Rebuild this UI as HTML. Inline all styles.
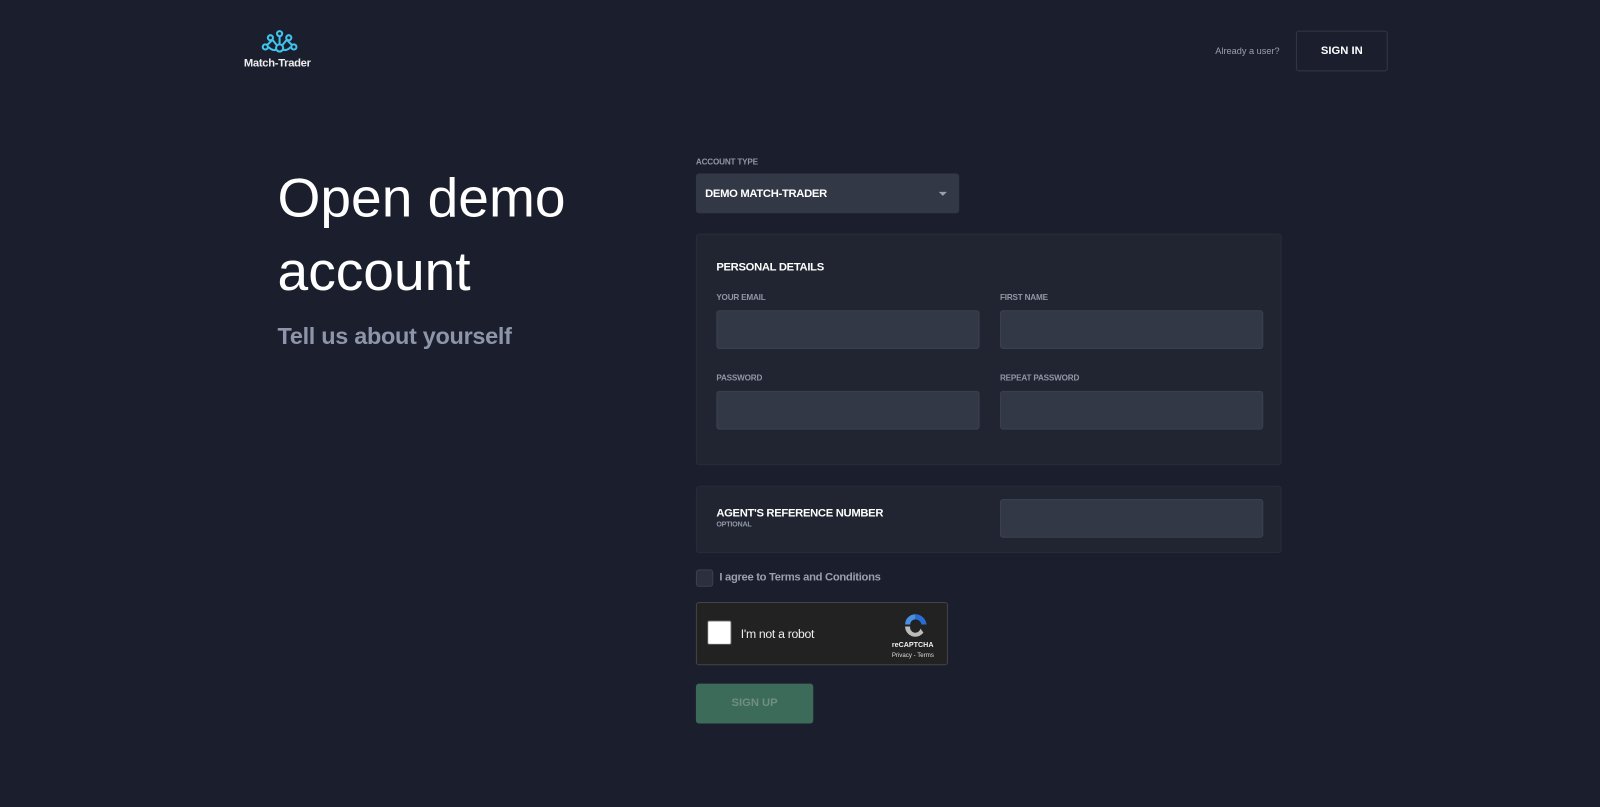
<!DOCTYPE html>
<html><head><style>
*{box-sizing:border-box;margin:0;padding:0}
body{width:1600px;height:807px;background:#1b1f2d;font-family:"Liberation Sans",sans-serif;color:#fff;overflow:hidden}
#w{position:relative;width:1568px;height:791px;transform:scale(1.0204);transform-origin:0 0}
.abs{position:absolute}
.lbl{font-size:8px;color:#9096a6;font-weight:bold;letter-spacing:-0.2px}
.inp{position:absolute;background:#333846;border:1px solid #3b4050;border-radius:3px;height:38px;width:258px}
.card{position:absolute;background:#212531;border:1px solid #282c38;border-radius:3px}
</style></head><body><div id="w">
<svg class="abs" style="left:256px;top:29px" width="36" height="25" viewBox="0 0 36 25" fill="none" stroke="#3fc4ee" stroke-width="2">
<circle cx="18" cy="4" r="2.5"/><circle cx="9" cy="8" r="2.5"/><circle cx="27" cy="8" r="2.5"/><circle cx="4" cy="17" r="2.5"/><circle cx="32" cy="17" r="2.5"/><circle cx="18" cy="18" r="3.5"/>
<path d="M18 7V14M11 10L15 15M25 10L21 15M7 17C10 20 13 21 15 19M29 17C26 20 23 21 21 19M11 10L6 15M25 10L30 15"/></svg>
<div class="abs" style="left:239px;top:56px;font-size:11px;font-weight:bold;color:#eee;letter-spacing:-0.3px">Match-Trader</div>
<div class="abs" style="left:1191px;top:45px;font-size:9px;color:#9aa0ae">Already a user?</div>
<div class="abs" style="left:1270px;top:30px;width:90px;height:40px;border:1px solid #333846;border-radius:3px;font-size:11px;font-weight:bold;text-align:center;line-height:38px">SIGN IN</div>
<div class="abs" style="left:272px;top:158px;font-size:54px;line-height:72px;color:#fff">Open demo<br>account</div>
<div class="abs" style="left:272px;top:316px;font-size:23px;color:#8f95a8;font-weight:bold;letter-spacing:-0.3px">Tell us about yourself</div>
<div class="abs lbl" style="left:682px;top:154px">ACCOUNT TYPE</div>
<div class="abs" style="left:682px;top:170px;width:258px;height:39px;background:#333846;border-radius:3px;font-size:11px;font-weight:bold;padding:14px 9px;letter-spacing:-0.3px">DEMO MATCH-TRADER
<div class="abs" style="right:12px;top:18px;width:0;height:0;border-left:4px solid transparent;border-right:4px solid transparent;border-top:4px solid #9aa0ae"></div></div>
<div class="card" style="left:682px;top:229px;width:574px;height:227px">
<div class="abs" style="left:19px;top:26px;font-size:11px;font-weight:bold;letter-spacing:-0.3px">PERSONAL DETAILS</div>
<div class="abs lbl" style="left:19px;top:57px">YOUR EMAIL</div>
<div class="abs lbl" style="left:297px;top:57px">FIRST NAME</div>
<div class="inp" style="left:19px;top:74px"></div>
<div class="inp" style="left:297px;top:74px"></div>
<div class="abs lbl" style="left:19px;top:136px">PASSWORD</div>
<div class="abs lbl" style="left:297px;top:136px">REPEAT PASSWORD</div>
<div class="inp" style="left:19px;top:153px"></div>
<div class="inp" style="left:297px;top:153px"></div>
</div>
<div class="card" style="left:682px;top:476px;width:574px;height:66px">
<div class="abs" style="left:19px;top:20px;font-size:11px;font-weight:bold;letter-spacing:-0.3px">AGENT'S REFERENCE NUMBER</div>
<div class="abs lbl" style="left:19px;top:34px;font-size:7px">OPTIONAL</div>
<div class="inp" style="left:297px;top:12px"></div>
</div>
<div class="abs" style="left:682px;top:558px;width:17px;height:17px;background:#2b303d;border:1px solid #3b4050;border-radius:3px"></div>
<div class="abs" style="left:705px;top:560px;font-size:11px;color:#9aa0ae;font-weight:bold;letter-spacing:-0.3px">I agree to Terms and Conditions</div>
<div class="abs" style="left:682px;top:590px;width:247px;height:62px;background:#222;border:1px solid #444;border-radius:3px">
<div class="abs" style="left:10px;top:17px;width:24px;height:24px;background:#fff;border-radius:2px;border:1px solid #555"></div>
<div class="abs" style="left:43px;top:23px;font-size:12px;color:#eee;letter-spacing:-0.3px">I'm not a robot</div>
<svg class="abs" style="left:200px;top:8px" width="28" height="28" viewBox="0 0 28 28"><path d="M14 3A11 11 0 0 1 25 13H20A6 6 0 0 0 14 8Z" fill="#2a6cd6"/><path d="M4 13A10 10 0 0 1 14 3V8A5 5 0 0 0 9 13Z" fill="#4a90e2"/><path d="M4 15H9A5 5 0 0 0 19 17L22 21A10 10 0 0 1 4 15Z" fill="#bbb"/></svg>
<div class="abs" style="left:191px;top:38px;font-size:7px;font-weight:bold;color:#eee">reCAPTCHA</div>
<div class="abs" style="left:191px;top:49px;font-size:6px;color:#ddd">Privacy - Terms</div>
</div>
<div class="abs" style="left:682px;top:670px;width:115px;height:39px;background:#3d6b5a;border-radius:3px;font-size:11px;font-weight:bold;color:#6f8f82;text-align:center;line-height:39px">SIGN UP</div>
</div></body></html>
